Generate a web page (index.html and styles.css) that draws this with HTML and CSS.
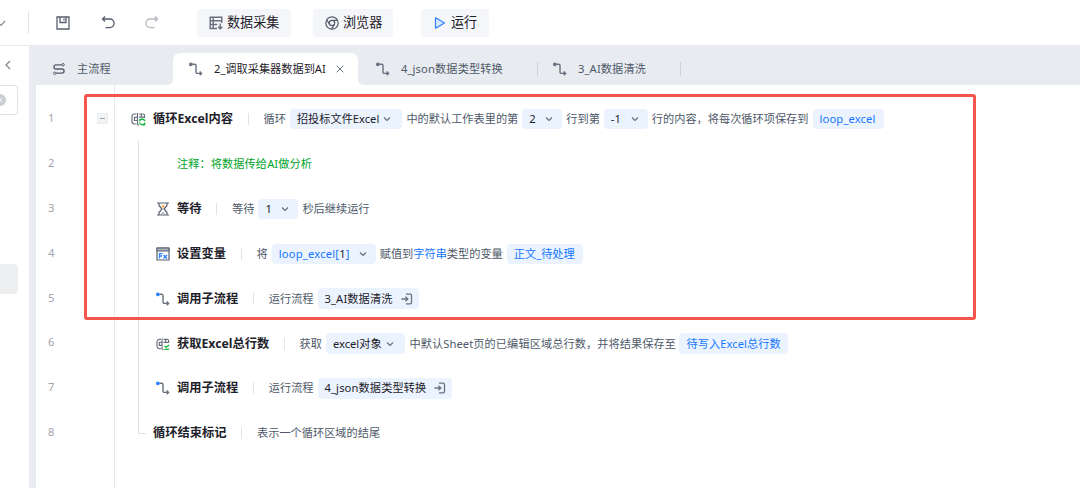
FILE: index.html
```html
<!DOCTYPE html>
<html lang="zh-CN">
<head>
<meta charset="utf-8">
<title>流程编辑器</title>
<link rel="stylesheet" href="styles.css">
</head>
<body>
<svg class="defs" aria-hidden="true">
  <symbol id="flow" viewBox="0 0 14 14"><path d="M3.500 2.300H5.700a1.300 1.300 0 0 1 1.300 1.300v6.500a1.300 1.300 0 0 0 1.300 1.300h4.700M10.700 9.500l1.900 1.900-1.900 1.900" fill="none" stroke="#69717f" stroke-width="1.400"/><circle class="dot" cx="1.900" cy="2.300" r="1.300" stroke-width="1.200"/></symbol>
  <symbol id="down" viewBox="0 0 8 8"><path d="M1 2.500l3 3 3-3" fill="none" stroke="#69717f" stroke-width="1.200"/></symbol>
  <symbol id="enter" viewBox="0 0 12 12"><path d="M5 1.200h4.200a1.300 1.300 0 0 1 1.300 1.300v7a1.300 1.300 0 0 1-1.300 1.300H5M.5 6h6.300M4.400 3.600L6.900 6 4.400 8.400" fill="none" stroke="#69717f" stroke-width="1.300"/></symbol>
  <symbol id="sheet" viewBox="0 0 15 14"><path d="M5.300 12H3.200Q1 11.600 1 9.500V4.500Q1 2.300 3.200 2H5.300M6.500 1V13M8 2h4.200a1.300 1.300 0 0 1 1.300 1.300V6M10.300 2v3M8 5.200h5.500M6.500 13H8M2.800 5.300h3.500M2.800 8.500h3.500M3.500 5.300v3.200" fill="none" stroke="#69717f" stroke-width="1.200"/></symbol>
</svg>

<header class="toolbar">
  <svg class="tb-caret" viewBox="0 0 6 8"><path d="M-1 4.500l2 2L5 2" fill="none" stroke="#858b96" stroke-width="1.200"/></svg>
  <i class="tb-line"></i>
  <svg class="tb-save" viewBox="0 0 14 14"><path d="M1 1h12v12H1zM4 1v5.500h6V1M8 2.500v2" fill="none" stroke="#565e6e" stroke-width="1.300"/></svg>
  <svg class="tb-undo" viewBox="0 0 14 14"><path d="M4 .5L1.500 3 4 5.500M1.500 3H8.800a4.300 4.300 0 0 1 0 8.600H4.500" fill="none" stroke="#565e6e" stroke-width="1.300"/></svg>
  <svg class="tb-redo" viewBox="0 0 14 14"><path d="M10 .5L12.500 3 10 5.500M12.500 3H5.200a4.300 4.300 0 0 0 0 8.600h4.300" fill="none" stroke="#b4b8bf" stroke-width="1.300"/></svg>
  <button class="btn btn-data">
    <svg class="bi" viewBox="0 0 14 14"><path d="M8 12.500H1.200V1.200h11.600V7M1.200 4.700h11.600M1.200 8.500h7M4.200 1.200V12.500M11.200 7.500v5M9 10.700l2.200 2.100 2.200-2.100" fill="none" stroke="#69717f" stroke-width="1.400"/></svg>
    <span>数据采集</span>
  </button>
  <button class="btn btn-web">
    <svg class="bi" viewBox="0 0 14 14"><g fill="none" stroke="#565e6e" stroke-width="1.200"><circle cx="7" cy="7" r="6.200"/><circle cx="7" cy="7" r="2.700"/><path d="M7 4.300h5.600M4.700 8.400L1.700 3.900M9.300 8.400L6.500 13.100"/></g></svg>
    <span>浏览器</span>
  </button>
  <button class="btn btn-run">
    <svg class="bi" viewBox="0 0 14 14"><path d="M2.500 1.800v10.400L11.500 7z" fill="#d9eaff" stroke="#2f80ff" stroke-width="1.200" stroke-linejoin="round"/></svg>
    <span>运行</span>
  </button>
</header>

<div class="main">
  <aside class="side">
    <svg class="collapse" viewBox="0 0 8 10"><path d="M6 1L2 5l4 4" fill="none" stroke="#7d8490" stroke-width="1.200"/></svg>
    <div class="search"><svg viewBox="0 0 12 12"><circle cx="6" cy="6" r="6" fill="#c9cdd4"/><path d="M4 4l4 4M8 4L4 8" stroke="#fff"/></svg></div>
    <div class="picked"></div>
  </aside>
  <section class="work">
    <nav class="tabs">
      <div class="tab tab-main">
        <svg class="ti" viewBox="0 0 14 14"><path d="M10 2.900H4a2 2 0 0 0 0 4.100h6a2 2 0 0 1 0 4.100H4" fill="none" stroke="#565e6e" stroke-width="1.400"/><circle cx="11.100" cy="2.700" r="1.200" fill="none" stroke="#565e6e"/><circle cx="2.700" cy="11.300" r="1.200" fill="none" stroke="#565e6e"/></svg>
        <span>主流程</span>
      </div>
      <div class="tab tab-active">
        <svg class="ti"><use href="#flow"/></svg>
        <span class="tab-name">2_调取采集器数据到AI</span>
        <svg class="close" viewBox="0 0 8 8"><path d="M.7.700l6.600 6.600M7.300.700L.7 7.300" stroke="#69717f"/></svg>
      </div>
      <div class="tab tab-json"><svg class="ti"><use href="#flow"/></svg><span>4_json数据类型转换</span></div>
      <div class="tab tab-ai"><svg class="ti"><use href="#flow"/></svg><span>3_AI数据清洗</span></div>
    </nav>

    <div class="editor">
      <div class="nums"><b>1</b><b>2</b><b>3</b><b>4</b><b>5</b><b>6</b><b>7</b><b>8</b></div>
      <div class="fold"><i></i></div>
      <div class="code">
        <div class="row row-loop">
          <svg class="ri-sheet" viewBox="0 0 15 14"><use href="#sheet"/><path d="M14 8.800A3 3 0 0 0 9 8.200V7M8.500 10.800a3 3 0 0 0 5 .9V13.500" fill="none" stroke="#16b83c" stroke-width="1.500"/></svg>
          <strong class="t-loop">循环Excel内容</strong><i class="bar"></i>
          <span>循环</span>
          <em class="chip c-file">招投标文件Excel<svg><use href="#down"/></svg></em>
          <span>中的默认工作表里的第</span>
          <em class="chip c-start"><span>2</span><svg><use href="#down"/></svg></em>
          <span>行到第</span>
          <em class="chip c-end"><span>-1</span><svg><use href="#down"/></svg></em>
          <span>行的内容，将每次循环项保存到</span>
          <em class="chip blue c-item">loop_excel</em>
        </div>
        <div class="body">
          <div class="rail"></div>
          <div class="rows">
            <div class="row note">注释：将数据传给AI做分析</div>
            <div class="row">
              <svg class="ri" viewBox="0 0 14 14"><path d="M1 1h12M1 13h12M3 1v2.500L6 7l-3 3.500V13M11 1v2.500L8 7l3 3.500V13" fill="none" stroke="#565e6e" stroke-width="1.200"/><path d="M5 3.500h4L7 6z" fill="#ff9c2b"/><path d="M4.500 12L7 9.500 9.500 12z" fill="#b9bdc5"/></svg>
              <strong>等待</strong><i class="bar"></i>
              <span>等待</span>
              <em class="chip c-start"><span>1</span><svg><use href="#down"/></svg></em>
              <span>秒后继续运行</span>
            </div>
            <div class="row">
              <svg class="ri" viewBox="0 0 14 14"><path d="M1 1h12v12H1z" fill="#fff" stroke="#565e6e" stroke-width="1.200"/><path d="M1 1h12v3H1z" fill="#aeb3bc" stroke="#565e6e"/><path d="M3.500 11.500V6.600h3M3.500 9h2.500M7.500 8l3.500 3.500M11 8l-3.500 3.500" fill="none" stroke="#2f80ff" stroke-width="1.300"/></svg>
              <strong>设置变量</strong><i class="bar"></i>
              <span>将</span>
              <em class="chip blue c-index"><span>loop_excel[<b class="idx">1</b>]</span><svg><use href="#down"/></svg></em>
              <span>赋值到<a>字符串</a>类型的变量</span>
              <em class="chip blue c-text">正文_待处理</em>
            </div>
            <div class="row">
              <svg class="ri call"><use href="#flow"/></svg>
              <strong>调用子流程</strong><i class="bar"></i>
              <span>运行流程</span>
              <em class="chip c-ai"><span>3_AI数据清洗</span><svg class="go"><use href="#enter"/></svg></em>
            </div>
            <div class="row">
              <svg class="ri" viewBox="0 0 15 14"><use href="#sheet"/><path d="M9 9l1.800 1.600L14 8M9 12.800h5" fill="none" stroke="#16b83c" stroke-width="1.400"/></svg>
              <strong class="t-count">获取Excel总行数</strong><i class="bar"></i>
              <span>获取</span>
              <em class="chip c-obj">excel对象<svg><use href="#down"/></svg></em>
              <span class="s-sheet">中默认Sheet页的已编辑区域总行数，并将结果保存至</span>
              <em class="chip blue c-total">待写入Excel总行数</em>
            </div>
            <div class="row">
              <svg class="ri call"><use href="#flow"/></svg>
              <strong>调用子流程</strong><i class="bar"></i>
              <span>运行流程</span>
              <em class="chip c-json"><span>4_json数据类型转换</span><svg class="go"><use href="#enter"/></svg></em>
            </div>
            <div class="row row-end">
              <strong>循环结束标记</strong><i class="bar"></i>
              <span>表示一个循环区域的结尾</span>
            </div>
          </div>
        </div>
      </div>
    </div>
  </section>
</div>
<div class="highlight"></div>
</body>
</html>
```
FILE: styles.css
```css
* { box-sizing: border-box; }
body {
  margin: 0;
  width: 1080px;
  height: 488px;
  overflow: hidden;
  display: flex;
  flex-direction: column;
  background: #fff;
  color: #4e5969;
  font: 11.2px/16px "Noto Sans", "Noto Sans CJK SC", sans-serif;
  white-space: nowrap;
}
svg { flex: none; display: block; overflow: visible; }
i, em { font-style: normal; }
.defs { position: absolute; width: 0; height: 0; }

.toolbar { height: 45px; display: flex; align-items: center; flex: none; }
.tb-caret { width: 6px; height: 8px; }
.tb-line { width: 1px; height: 23px; margin-left: 22px; background: #e5e6eb; }
.tb-save { width: 14px; height: 14px; margin-left: 27px; }
.tb-undo { width: 14px; height: 14px; margin-left: 31px; }
.tb-redo { width: 14px; height: 14px; margin-left: 30px; }
.btn {
  height: 28px;
  padding: 0 0 0 12px;
  border: 0;
  border-radius: 4px;
  background: #f5f6f9;
  color: #1d2129;
  font: 13.1px/20px "Noto Sans CJK SC", sans-serif;
  display: flex;
  align-items: center;
  gap: 4px;
}
.btn span { margin-top: -1px; }
.bi { width: 14px; height: 14px; }
.btn-data { width: 94px; margin-left: 38px; }
.btn-web { width: 80px; margin-left: 22px; }
.btn-run { width: 68px; margin-left: 28px; }

.main { flex: 1; display: flex; min-height: 0; }
.side { width: 29px; flex: none; border-top: 1px solid #e8ebf0; }
.collapse { width: 8px; height: 10px; margin: 14px 0 0 4px; }
.search {
  width: 18px;
  height: 30px;
  margin-top: 15px;
  border: 1px solid #dfe1e6;
  border-left: 0;
  border-radius: 0 4px 4px 0;
  display: flex;
  align-items: center;
}
.search svg { width: 12px; height: 12px; margin-left: -6px; }
.picked { width: 18px; height: 30px; margin-top: 149px; border-radius: 0 4px 4px 0; background: #edeef0; }

.work { flex: 1; min-width: 0; display: flex; flex-direction: column; border-left: 7px solid #e8ebf0; }
.tabs { height: 40px; flex: none; display: flex; align-items: flex-end; background: #e8ebf0; }
.tab { height: 32px; display: flex; align-items: center; }
.ti { width: 14px; height: 14px; --dot: #69717f; }
.dot { fill: var(--dot); stroke: var(--dot); }
.tab-main { width: 137px; padding-left: 16px; gap: 11px; }
.tab-active {
  position: relative;
  width: 185px;
  padding-left: 16px;
  border-radius: 7px 7px 0 0;
  background: #fff;
  color: #1d2129;
}
.tab-active::before, .tab-active::after {
  content: "";
  position: absolute;
  bottom: 0;
  width: 5px;
  height: 5px;
}
.tab-active::before { left: -5px; background: radial-gradient(circle at 0 0, #e8ebf0 4.5px, #fff 5px); }
.tab-active::after { right: -5px; background: radial-gradient(circle at 100% 0, #e8ebf0 4.5px, #fff 5px); }
.tab-name { width: 112px; margin-left: 11px; }
.close { width: 8px; height: 8px; margin-left: 10px; }
.tab-json { width: 180px; padding-left: 18px; gap: 11px; letter-spacing: .12px; }
.tab-ai { width: 143px; padding-left: 15px; gap: 11px; letter-spacing: .12px; }
.tab-json, .tab-ai { background: linear-gradient(#d0d4da, #d0d4da) right center / 1px 14px no-repeat; }

.editor { flex: 1; display: flex; padding-top: 11px; background: linear-gradient(#e8e9ed, #e8e9ed) 78px 0 / 1px 100% no-repeat; }
.nums { width: 61px; padding-left: 12px; display: flex; flex-direction: column; color: #a0a5ae; }
.nums b { height: 44.9px; line-height: 44.9px; font-weight: 400; }
.fold { width: 34px; height: 44.9px; display: flex; align-items: center; padding-top: 1px; }
.fold i {
  width: 11px;
  height: 11px;
  border: 1px solid #ebecf0;
  background: linear-gradient(#a0a5ae, #a0a5ae) center / 5px 1px no-repeat #f2f3f5;
}

.row { height: 44.9px; display: flex; align-items: center; padding-top: 1.4px; padding-left: 10px; }
.row-loop { padding-left: 0; }
.row-end { padding-left: 7px; }
.ri-sheet { width: 15px; height: 14px; margin-right: 7px; }
.ri { width: 14px; height: 14px; margin-right: 7px; }
.call { --dot: #2f80ff; }
.row strong { color: #1d2129; font-size: 12.25px; font-weight: 700; }
.t-loop { width: 80px; }
.t-count { width: 92px; }
.bar { width: 1px; height: 12px; margin: 0 15px 0 14.5px; background: #e1e3e8; }
.note { padding-left: 31px; color: #00a32a; letter-spacing: .08px; }

.chip {
  height: 20.5px;
  margin: 0 4px;
  padding: 0 7px;
  border-radius: 4px;
  background: #ebf3ff;
  color: #1d2129;
  display: flex;
  align-items: center;
  justify-content: space-between;
}
.chip svg { width: 8px; height: 8px; margin-right: 4px; }
.chip .go { width: 12px; height: 12px; margin-right: -1px; }
.blue, .row a { color: #1677ff; }
.idx { color: #1d2129; font-weight: 400; }
.c-file { width: 112.5px; }
.c-start { width: 40px; }
.c-end { width: 44px; }
.c-start svg, .c-end svg, .c-index svg { margin-right: 2px; }
.c-item { width: 71px; letter-spacing: .15px; }
.c-index { width: 104px; letter-spacing: .2px; }
.c-text { width: 76px; }
.c-ai { width: 101px; letter-spacing: .12px; }
.c-obj { width: 79.5px; }
.c-total { width: 109px; letter-spacing: .07px; }
.c-json { width: 134px; letter-spacing: .12px; }
.s-sheet { width: 266px; letter-spacing: .08px; }

.body { display: flex; margin-left: 7px; }
.rail { width: 8px; height: 293px; border-left: 1px solid #dfe1e6; border-bottom: 1px solid #dfe1e6; }

.highlight {
  position: absolute;
  left: 84px;
  top: 94px;
  width: 892px;
  height: 226px;
  border: 3px solid #f5554a;
  border-radius: 3px;
}
```
